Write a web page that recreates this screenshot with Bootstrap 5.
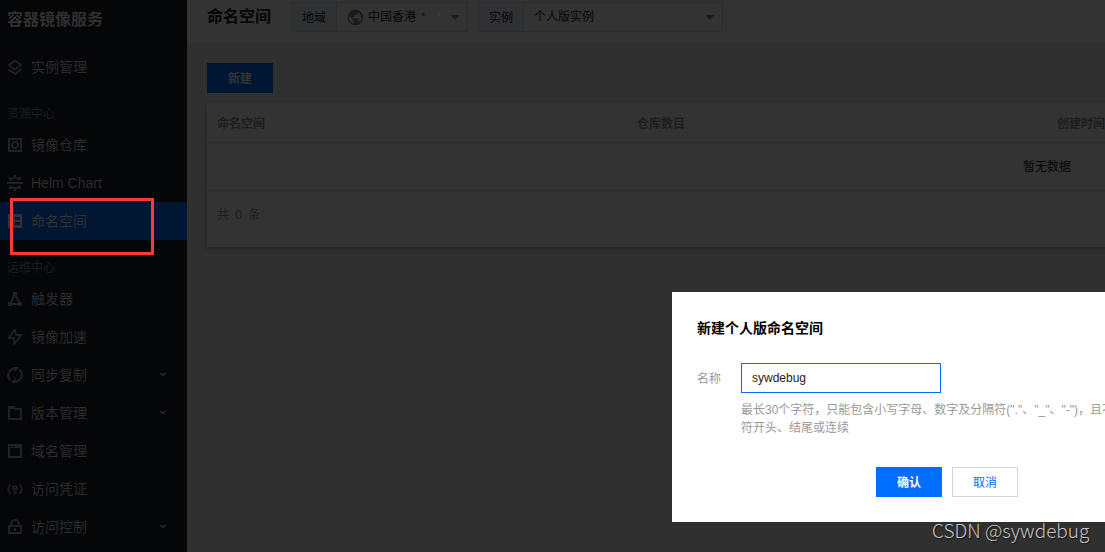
<!DOCTYPE html>
<html lang="zh-CN">
<head>
<meta charset="utf-8">
<title>容器镜像服务</title>
<link href="https://cdn.jsdelivr.net/npm/bootstrap@5.3.0/dist/css/bootstrap.min.css" rel="stylesheet">
<style>
body{font:12px/18px "Liberation Sans","Noto Sans CJK SC",sans-serif;background:#303030;color:#060606;height:552px;overflow:hidden;position:relative}
.side{width:187px;height:552px;background:#050607;color:#2d2e2f;font-size:14px}
.brand{font-size:16px;font-weight:700;height:48px;padding:10px 7px 0;line-height:20px;color:#303030}
.entry{height:38px;padding:0 7px;color:#2b2c2d;gap:8px}
.entry svg{width:16px;height:16px;fill:none;stroke:#1f2123;stroke-width:2;flex:none;overflow:visible}
.entry .chev{width:8px;height:8px;margin-left:auto;margin-right:13px;stroke:#2b2c2d;stroke-width:1.5}
.entry.current{background:#001633;color:#333}
.entry.current svg{stroke:#333}
.group{height:40px;font-size:12px;padding:19px 7px 0;color:#1b1d1f;line-height:18px}
.main{overflow:hidden}
.topbar{height:43px;background:#333;padding:2px 0 0 20px}
.topbar h1{font-size:16px;font-weight:700;line-height:30px;margin:0;width:84px}
.picker{height:30px;border:1px solid #2c2d2e}
.picker .tag{background:#303133;border-right:1px solid #2c2d2e;padding:0 10px;line-height:31px}
.picker .val{padding:0 8px 0 10px;line-height:28px}
.tri{border:4px solid transparent;border-top:5px solid #1b1b1b;border-bottom:0;margin-left:auto}
.box-btn{width:66px;height:30px;border-radius:0;font-size:12px;line-height:18px;padding:6px 0 4px;border-width:1px}
.new-btn,.new-btn:hover{background:#001633;color:#333;font-weight:700}
.ok-btn,.ok-btn:hover{background:#006eff;border-color:#006eff;color:#fff;font-weight:700}
.no-btn,.no-btn:hover{background:#fff;border-color:#cfd5de;color:#006eff}
.panel{width:1680px;height:144px;background:#333;box-shadow:0 2px 4px #242424;margin-top:10px}
.heads{height:40px;border-bottom:1px solid #2a2a2a;color:#1d1d1d;font-weight:700;line-height:42px}
.heads div{width:420px;padding-left:10px}
.empty{height:48px;border-bottom:1px solid #2a2a2a;line-height:49px}
.total{padding:15px 10px;color:#1d1d1d;word-spacing:3px}
.dlg{position:absolute;left:672px;top:292px;width:750px;height:230px;background:#fff;padding:25px;color:#000}
.dlg h2{font-size:14px;font-weight:700;line-height:22px;margin:0 0 24px}
.dlg label{width:44px;color:#999;line-height:32px}
.name-box{width:200px;height:30px;border:1px solid #006eff;border-radius:0;font-size:12px;padding:0 10px;color:#222;box-shadow:none!important}
.hint{color:#999;white-space:nowrap;margin:8px 0 30px}
.actions{gap:10px;width:342px}
.marker{position:absolute;left:10px;top:198px;width:144px;height:57px;border:3px solid #ff3838}
.wm{position:absolute;left:932px;top:517px;font:19px/26px "Noto Sans CJK SC",sans-serif;font-weight:300;color:#c6c6c6;text-shadow:1px 1px 1px #111;white-space:nowrap}
</style>
</head>
<body>
<div class="d-flex">
<nav class="side flex-shrink-0">
 <div class="brand">容器镜像服务</div>
 <div class="entry d-flex align-items-center"><svg viewBox="0 0 16 16"><path d="M8 1.500 14 6 8 10.500 2 6ZM1.500 10 8 15l6.500-5"/></svg>实例管理</div>
 <div class="group">资源中心</div>
 <div class="entry d-flex align-items-center"><svg viewBox="0 0 16 16"><path d="M2 2h12v12H2Z"/><circle cx="8" cy="8" r="3"/></svg>镜像仓库</div>
 <div class="entry d-flex align-items-center"><svg viewBox="0 0 16 16"><path d="M0 8h16M3 5Q8 .5 13 5M3 11q5 4.500 10 0M8 0v3M2 2l2 2M14 2l-2 2M8 16v-3M2 14l2-2M14 14l-2-2"/></svg>Helm Chart</div>
 <div class="entry current d-flex align-items-center"><svg viewBox="0 0 16 16"><path fill="#333" fill-rule="evenodd" stroke="none" d="M1 1h14v14H1ZM3 3v2h3V3ZM3 7v2h3V7ZM3 11v2h3v-2ZM8 4v3h5V4ZM8 9v3h5V9Z"/></svg>命名空间</div>
 <div class="group">运维中心</div>
 <div class="entry d-flex align-items-center"><svg viewBox="0 0 16 16"><path d="M8 3 3 13h10Z"/><path fill="#1f2123" stroke="none" d="M6 1h4v4H6ZM1 11h4v4H1ZM11 11h4v4h-4Z"/></svg>触发器</div>
 <div class="entry d-flex align-items-center"><svg viewBox="0 0 16 16" stroke-linejoin="round"><path stroke-width="1.800" d="M7.500 1 1.500 9H7V15l7.500-9H9L8 1Z"/></svg>镜像加速</div>
 <div class="entry d-flex align-items-center"><svg viewBox="0 0 16 16"><path d="M3.500 13.500A7 7 0 0 1 7 1.500M12.500 2.500A7 7 0 0 1 9 14.500"/><path fill="#1f2123" stroke="none" d="M6 0h6L8 5ZM10 16H4l4-5Z"/></svg>同步复制<svg class="chev" viewBox="0 0 8 8"><path d="m1.500 2 2.500 2.500L6.500 2"/></svg></div>
 <div class="entry d-flex align-items-center"><svg viewBox="0 0 16 16"><path d="M2 14V2h5l1 2h6v10ZM2 3h5"/></svg>版本管理<svg class="chev" viewBox="0 0 8 8"><path d="m1.500 2 2.500 2.500L6.500 2"/></svg></div>
 <div class="entry d-flex align-items-center"><svg viewBox="0 0 16 16"><path d="M2 2h12v12H2ZM2 4h12"/><path stroke="#050607" stroke-width="1" d="M3 3.500h1.500M6 3.500h1.500"/></svg>域名管理</div>
 <div class="entry d-flex align-items-center"><svg viewBox="0 0 16 16"><path stroke-width="1.600" d="M3.500 3Q-1 8 3.500 13M12.500 3q4.500 5 0 10M6 5.500h4v2.500H6ZM7.500 8v5M7.500 12h2.500"/></svg>访问凭证</div>
 <div class="entry d-flex align-items-center"><svg viewBox="0 0 16 16"><path d="M2 7h12v7H2ZM4 7V5a4 4 0 0 1 8 0v2M8 9v3"/></svg>访问控制<svg class="chev" viewBox="0 0 8 8"><path d="m1.500 2 2.500 2.500L6.500 2"/></svg></div>
</nav>
<main class="main flex-grow-1">
 <header class="topbar d-flex">
  <h1>命名空间</h1>
  <div class="picker d-flex" style="width:177px"><span class="tag">地域</span>
   <div class="val d-flex align-items-center flex-grow-1"><svg class="me-1" width="17" height="17" viewBox="0 0 24 24" fill="#1b1b1b"><path d="M12 1a11 11 0 1 0 0 22 11 11 0 0 0 0-22Zm-1 19.900A9 9 0 0 1 3.200 10L8 15v1c0 1.100.9 2 2 2v2.900Zm7.900-2.500A2 2 0 0 0 17 17h-1v-3a1 1 0 0 0-1-1H8v-2h3V8h2a2 2 0 0 0 2-2v-.9a9 9 0 0 1 3.900 13.300Z"/></svg>中国香港<span style="color:#001c05;margin-left:5px">*</span><span style="color:#5a3a18;margin-left:10px">*</span><i class="tri"></i></div></div>
  <div class="picker d-flex" style="width:245px;margin-left:10px"><span class="tag">实例</span><div class="val d-flex align-items-center flex-grow-1">个人版实例<i class="tri"></i></div></div>
 </header>
 <section style="padding:20px 0 0 20px">
  <button class="btn box-btn new-btn d-block">新建</button>
  <div class="panel">
   <div class="heads d-flex"><div>命名空间</div><div>仓库数目</div><div>创建时间</div></div>
   <div class="empty text-center">暂无数据</div>
   <div class="total">共 0 条</div>
  </div>
 </section>
</main>
</div>
<div class="marker"></div>
<div class="dlg">
 <h2>新建个人版命名空间</h2>
 <div class="d-flex"><label for="ns">名称</label>
  <div><input id="ns" class="form-control name-box" value="sywdebug">
  <div class="hint">最长30个字符，只能包含小写字母、数字及分隔符("."、"_"、"-")，且不能以分隔<br>符开头、结尾或连续</div></div></div>
 <div class="d-flex justify-content-center"><div class="actions d-flex"><button class="btn box-btn ok-btn">确认</button><button class="btn box-btn no-btn">取消</button></div></div>
</div>
<div class="wm">CSDN @sywdebug</div>
<script src="https://cdn.jsdelivr.net/npm/bootstrap@5.3.0/dist/js/bootstrap.bundle.min.js"></script>
</body>
</html>
